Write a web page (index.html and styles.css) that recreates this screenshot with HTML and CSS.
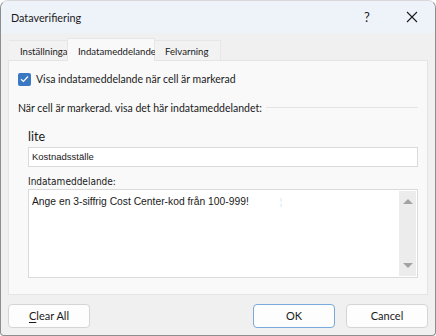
FILE: index.html
```html
<!DOCTYPE html>
<html lang="sv">
<head>
    <meta charset="UTF-8">
    <title>Dataverifiering</title>
    <link rel="stylesheet" href="styles.css">
</head>
<body>
<div class="dialog">
    <div class="titlebar">
        <span class="title">Dataverifiering</span>
        <span class="help">?</span>
        <span class="close">
            <svg width="12" height="12" viewBox="0 0 12 12"><path d="M1 1L11 11M11 1L1 11" stroke="#1b1b1b" stroke-width="1.1" fill="none"/></svg>
        </span>
    </div>
    <div class="body">
        <div class="tabs">
            <div class="tab first">Inställningar</div>
            <div class="tab active">Indatameddelande</div>
            <div class="tab">Felvarning</div>
        </div>
        <div class="panel">
            <div class="check">
                <span class="box">
                    <svg width="9" height="8" viewBox="0 0 9 8"><path d="M1 4.2L3.4 6.4L8 1.5" stroke="#fff" stroke-width="1.2" fill="none"/></svg>
                </span>
                <span>Visa indatameddelande när cell är markerad</span>
            </div>
            <div class="section">
                <span>När cell är markerad. visa det här indatameddelandet:</span>
                <span class="rule"></span>
            </div>
            <div class="fields">
                <div class="label-big">lite</div>
                <div class="input">Kostnadsställe</div>
                <div class="label">Indatameddelande:</div>
                <div class="textarea">
                    <div class="text">Ange en 3-siffrig Cost Center-kod från 100-999!<span class="caret">¦</span></div>
                    <div class="scroll">
                        <span class="arrow up"></span>
                        <span class="arrow down"></span>
                    </div>
                </div>
            </div>
        </div>
        <div class="buttons">
            <div class="btn"><u>C</u>lear All</div>
            <div class="spacer"></div>
            <div class="btn ok">OK</div>
            <div class="btn">Cancel</div>
        </div>
    </div>
</div>
</body>
</html>
```

FILE: styles.css
```css
* {
    margin: 0;
    padding: 0;
    box-sizing: border-box;
}
html, body {
    background: #fff;
}
body {
    font-family: Lato, "Open Sans", sans-serif;
    font-size: 10.5px;
    color: #1a1a1a;
}
.dialog {
    width: 436px;
    height: 336px;
    border: 1px solid #8e8e8e;
    border-top-color: #d8d8d8;
    border-radius: 8px 8px 4px 4px;
    overflow: hidden;
    display: flex;
    flex-direction: column;
    background: #f0f0f0;
}
.titlebar {
    height: 32px;
    background: #eef3fa;
    display: flex;
    align-items: center;
    padding-left: 10px;
}
.title {
    flex: 1;
    font-size: 10.8px;
}
.help {
    width: 44px;
    text-align: center;
    font-size: 13px;
}
.close {
    width: 46px;
    display: flex;
    justify-content: center;
}
.body {
    flex: 1;
    padding: 5px 7px 0 7px;
}
.tabs {
    display: flex;
    align-items: flex-end;
    height: 22px;
    padding-left: 1px;
    position: relative;
    z-index: 1;
}
.tab {
    height: 20px;
    padding: 0 0 0 10px;
    font-size: 9.6px;
    line-height: 21px;
    background: #f2f2f2;
    border: 1px solid #e6e6e6;
    border-bottom: none;
    white-space: nowrap;
}
.tab.first {
    border-left: none;
    border-right: none;
    padding: 0 0 0 11px;
    width: 58px;
}
.tab.active {
    height: 23px;
    margin-bottom: -1px;
    background: #f9f9f9;
    padding: 0 0 0 10px;
    width: 88px;
    line-height: 25px;
}
.tab.active + .tab {
    border-left: none;
    width: 66px;
}
.panel {
    height: 235px;
    background: #f9f9f9;
    border: 1px solid #e5e5e5;
    padding: 11px 9px 0 9px;
}
.check {
    display: flex;
    align-items: center;
    gap: 5px;
    height: 14px;
}
.box {
    width: 13px;
    height: 13px;
    border-radius: 2px;
    background: #3b78c4;
    display: flex;
    align-items: center;
    justify-content: center;
}
.section {
    display: flex;
    align-items: center;
    margin-top: 15px;
    height: 14px;
}
.rule {
    flex: 1;
    height: 1px;
    background: #e3e3e3;
    margin: 0 0 1px 4px;
}
.fields {
    padding: 0 0 0 10px;
    margin-top: 14px;
}
.label-big {
    font-size: 12.5px;
    height: 16px;
    line-height: 16px;
}
.input {
    margin-top: 2px;
    width: 390px;
    height: 20px;
    background: #fff;
    border: 1px solid #dadada;
    font-family: "Liberation Sans", Arial, sans-serif;
    font-size: 9.5px;
    line-height: 18px;
    padding-left: 3px;
}
.label {
    margin-top: 8px;
    font-family: "DejaVu Sans Condensed", "Liberation Sans", sans-serif;
    font-size: 10px;
    height: 14px;
    line-height: 14px;
}
.textarea {
    width: 390px;
    height: 89px;
    background: #fff;
    border: 1px solid #dadada;
    display: flex;
    padding: 1px 1px 1px 0;
}
.text {
    flex: 1;
    font-family: "Liberation Sans", Arial, sans-serif;
    font-size: 10.3px;
    padding: 5px 0 0 3px;
}
.caret {
    color: #c4e3f6;
    margin-left: 31px;
    font-size: 9px;
}
.scroll {
    width: 17px;
    background: #ececec;
    display: flex;
    flex-direction: column;
    justify-content: space-between;
    align-items: center;
    padding: 8px 0 8px 0;
}
.arrow {
    width: 0;
    height: 0;
    border-left: 5px solid transparent;
    border-right: 5px solid transparent;
}
.arrow.up {
    border-bottom: 5px solid #a3a3a3;
}
.arrow.down {
    border-top: 5px solid #a3a3a3;
}
.buttons {
    display: flex;
    gap: 11px;
    margin-top: 9px;
}
.spacer {
    flex: 1;
}
.btn {
    width: 82px;
    height: 24px;
    background: #fdfdfd;
    border: 1px solid #d5d5d5;
    border-radius: 4px;
    text-align: center;
    font-size: 11px;
    line-height: 22px;
}
.btn u {
    text-underline-offset: 2px;
}
.btn.ok {
    border-color: #7aa9dc;
}
```
